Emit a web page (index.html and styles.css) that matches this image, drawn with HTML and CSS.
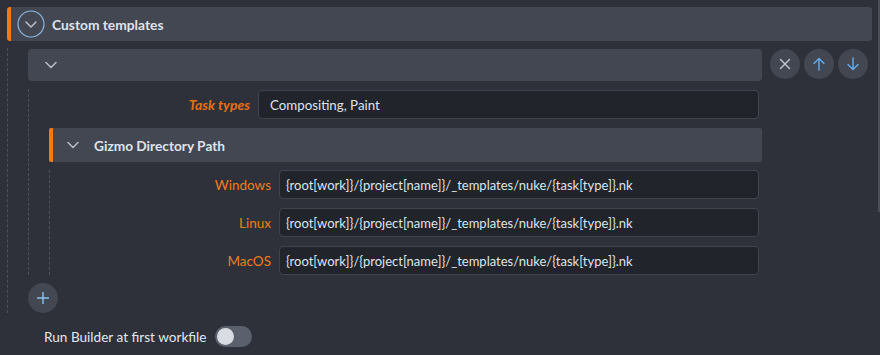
FILE: index.html
```html
<!DOCTYPE html>
<html>
<head>
<meta charset="utf-8">
<link rel="stylesheet" href="styles.css">
</head>
<body>
<div class="page">
  <div class="section-header">
    <span class="circle-toggle">
      <svg width="28" height="28" viewBox="0 0 28 28"><circle cx="14" cy="14" r="13" fill="none" stroke="#8ab6df" stroke-width="1.2"/><path d="M9 12 L14 17 L19 12" fill="none" stroke="#b9bec8" stroke-width="1.5" stroke-linecap="round" stroke-linejoin="round"/></svg>
    </span>
    <span class="section-title">Custom templates</span>
  </div>
  <div class="section-body">
    <div class="list-row">
      <div class="item-header">
        <svg class="chev" width="12" height="8" viewBox="0 0 12 8"><path d="M1 1.5 L6 6.5 L11 1.5" fill="none" stroke="#b9bec8" stroke-width="1.5" stroke-linecap="round" stroke-linejoin="round"/></svg>
      </div>
      <div class="item-buttons">
        <button class="round-btn"><svg width="12" height="12" viewBox="0 0 12 12"><path d="M1.5 1.5 L10.5 10.5 M10.5 1.5 L1.5 10.5" stroke="#c3c8d1" stroke-width="1.4" stroke-linecap="round"/></svg></button>
        <button class="round-btn"><svg width="12" height="14" viewBox="0 0 12 14"><path d="M6 13 L6 1.5 M1 6.5 L6 1.5 L11 6.5" fill="none" stroke="#62aef0" stroke-width="1.4" stroke-linecap="round" stroke-linejoin="round"/></svg></button>
        <button class="round-btn"><svg width="12" height="14" viewBox="0 0 12 14"><path d="M6 1 L6 12.5 M1 7.5 L6 12.5 L11 7.5" fill="none" stroke="#62aef0" stroke-width="1.4" stroke-linecap="round" stroke-linejoin="round"/></svg></button>
      </div>
    </div>
    <div class="item-body">
      <div class="field-row">
        <label class="field-label modified">Task types</label>
        <div class="field-input chips">Compositing, Paint</div>
      </div>
      <div class="sub-header">
        <svg class="chev" width="12" height="8" viewBox="0 0 12 8"><path d="M1 1.5 L6 6.5 L11 1.5" fill="none" stroke="#b9bec8" stroke-width="1.5" stroke-linecap="round" stroke-linejoin="round"/></svg>
        <span class="sub-title">Gizmo Directory Path</span>
      </div>
      <div class="sub-body">
        <div class="field-row">
          <label class="field-label">Windows</label>
          <div class="field-input">{root[work]}/{project[name]}/_templates/nuke/{task[type]}.nk</div>
        </div>
        <div class="field-row">
          <label class="field-label">Linux</label>
          <div class="field-input">{root[work]}/{project[name]}/_templates/nuke/{task[type]}.nk</div>
        </div>
        <div class="field-row">
          <label class="field-label">MacOS</label>
          <div class="field-input">{root[work]}/{project[name]}/_templates/nuke/{task[type]}.nk</div>
        </div>
      </div>
    </div>
    <button class="round-btn add-btn"><svg width="12" height="12" viewBox="0 0 12 12"><path d="M6 0.5 L6 11.5 M0.5 6 L11.5 6" stroke="#8cc4f2" stroke-width="1.4" stroke-linecap="round"/></svg></button>
  </div>
  <div class="toggle-row">
    <span class="toggle-label">Run Builder at first workfile</span>
    <span class="toggle"><span class="knob"></span></span>
  </div>
</div>
<div class="scroll-thumb"></div>
</body>
</html>
```
FILE: styles.css
```css
html, body {
  margin: 0;
  padding: 0;
  background: #2e313a;
  width: 880px;
  height: 355px;
  overflow: hidden;
}
body {
  position: relative;
  font-family: Lato, "Noto Sans", sans-serif;
  font-size: 13.5px;
  color: #dde1e8;
}
.page {
  padding: 7px 8px 0 7px;
}
.section-header {
  height: 34px;
  background: #434752;
  border-left: 4px solid #f07c12;
  border-radius: 3px;
  display: flex;
  align-items: center;
  padding-left: 6px;
  box-sizing: border-box;
}
.circle-toggle {
  width: 28px;
  height: 28px;
  display: flex;
}
.section-title {
  margin-left: 7px;
  font-weight: 700;
  font-size: 13.8px;
  color: #dfe3ea;
}
.section-body {
  margin-top: 7px;
  border-left: 1px dashed #4d515c;
  padding-left: 20px;
  padding-top: 1px;
  padding-bottom: 0;
}
.list-row {
  display: flex;
  gap: 8px;
  padding-right: 4px;
}
.item-header {
  flex: 1;
  height: 32px;
  background: #434752;
  border-radius: 4px;
  display: flex;
  align-items: center;
  padding-left: 17px;
}
.item-buttons {
  display: flex;
  gap: 4px;
}
.round-btn {
  width: 30px;
  height: 30px;
  border-radius: 50%;
  border: none;
  background: #434752;
  padding: 0;
  display: flex;
  align-items: center;
  justify-content: center;
}
.item-body {
  margin-top: 8px;
  margin-right: 110px;
  border-left: 1px dashed #4d515c;
  padding-left: 20px;
  padding-top: 1px;
}
.field-row {
  display: flex;
  align-items: center;
  gap: 8px;
  margin-right: 3px;
}
.field-label {
  width: 201px;
  text-align: right;
  color: #f07d1c;
  font-size: 13.5px;
}
.field-label.modified {
  font-style: italic;
  font-weight: 700;
  font-size: 14px;
  color: #ea6f10;
}
.field-input {
  flex: 1;
  height: 29px;
  box-sizing: border-box;
  border: 1px solid #40444e;
  border-radius: 4px;
  background: #21242b;
  display: flex;
  align-items: center;
  padding-left: 6px;
  color: #dfe3ea;
  font-size: 13px;
}
.field-input.chips {
  padding-left: 11px;
  font-size: 13.3px;
}
.sub-header {
  margin-top: 9px;
  height: 34px;
  background: #434752;
  border-left: 4px solid #f07c12;
  border-radius: 2px;
  display: flex;
  align-items: center;
  padding-left: 14px;
}
.sub-title {
  margin-left: 15px;
  font-weight: 700;
  font-size: 13.7px;
  color: #dfe3ea;
}
.sub-body {
  margin-top: 8px;
  border-left: 1px dashed #4d515c;
  padding-left: 20px;
  display: flex;
  flex-direction: column;
  gap: 9px;
}
.add-btn {
  margin-top: 8px;
}
.toggle-row {
  margin-top: 13px;
  display: flex;
  align-items: center;
  padding-left: 37px;
  gap: 8px;
}
.toggle-label {
  color: #e3e6ec;
  font-size: 13.6px;
}
.toggle {
  width: 37px;
  height: 21px;
  border-radius: 11px;
  background: #5a606c;
  display: flex;
  align-items: center;
  padding-left: 2px;
  box-sizing: border-box;
}
.knob {
  width: 17px;
  height: 17px;
  border-radius: 50%;
  background: #d9dce3;
}
.scroll-thumb {
  position: absolute;
  top: 0;
  right: 0;
  width: 2px;
  height: 212px;
  background: #4a4e59;
}
```
